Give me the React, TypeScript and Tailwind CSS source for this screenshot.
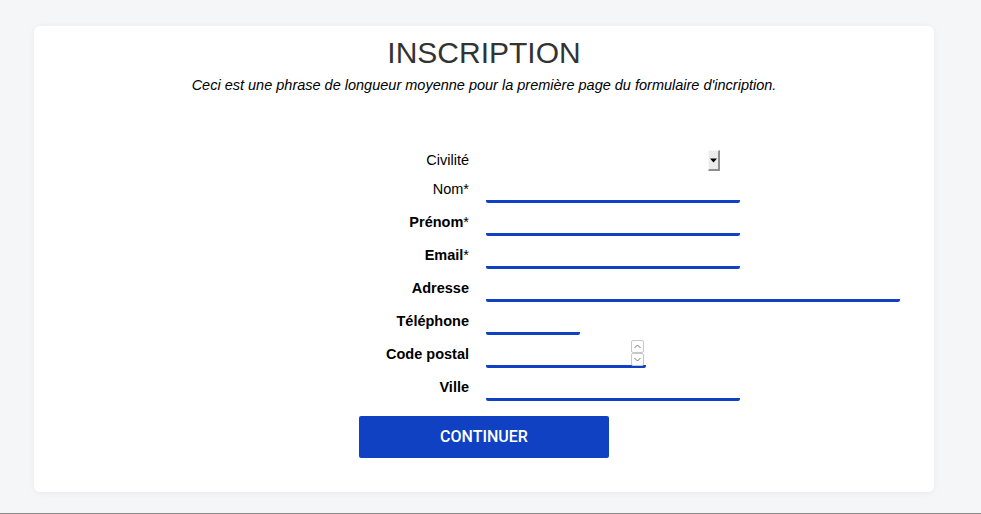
import React from "react";

const blue = "border-[#0f41c2]";

function Row({
  label,
  bold,
  star,
  width,
  children,
}: {
  label: string;
  bold?: boolean;
  star?: boolean;
  width: string;
  children?: React.ReactNode;
}) {
  return (
    <div className="flex items-start h-[26px]">
      <div className="w-[435px] text-right mt-[2px] leading-[20px] text-[14.5px] text-black">
        <span className={bold ? "font-bold" : ""}>{label}</span>
        {star ? <span>*</span> : null}
      </div>
      <div
        className={`ml-[17px] h-[26px] border-b-[3px] ${blue} rounded-b-[2px] ${width} flex justify-end items-end`}
      >
        {children}
      </div>
    </div>
  );
}

export default function App() {
  return (
    <div
      className="h-[514px] bg-[#f5f6f8] border-b border-[#8a8a8a] pt-[26px] pl-[34px]"
      style={{ fontFamily: '"Liberation Sans", Arial, sans-serif' }}
    >
      <div className="w-[900px] h-[466px] bg-white rounded-[6px] shadow-[0_1px_6px_rgba(0,0,0,0.06)] pt-[10px] flex flex-col">
        <h1 className="text-center text-[30px] leading-[34px] text-[#333333]">INSCRIPTION</h1>
        <p className="mt-[5px] text-center italic text-[14.5px] leading-[20px] text-black">
          Ceci est une phrase de longueur moyenne pour la première page du formulaire d'incription.
        </p>

        <div className="mt-[55px] flex flex-col gap-[7px]">
          <div className="flex items-center h-[20px]">
            <div className="w-[435px] text-right leading-[20px] text-[14.5px] text-black">Civilité</div>
            <div className="ml-[17px] w-[234px] h-[20px] flex justify-end">
              <div className="w-[12px] h-[21px] bg-[#ececec] border-r-2 border-b-2 border-[#8f8f8f] border-t border-l border-t-[#f8f8f8] border-l-[#f8f8f8] flex items-center justify-center">
                <svg width="7" height="5" viewBox="0 0 7 5">
                  <path d="M0 0.5h7L3.5 4.5z" fill="#000" />
                </svg>
              </div>
            </div>
          </div>

          <Row label="Nom" star width="w-[254px]" />
          <Row label="Prénom" bold star width="w-[254px]" />
          <Row label="Email" bold star width="w-[254px]" />
          <Row label="Adresse" bold width="w-[414px]" />
          <Row label="Téléphone" bold width="w-[94px]" />
          <Row label="Code postal" bold width="w-[160px]">
            <div className="mr-[2px] mb-[-1px] flex flex-col">
              <div className="w-[13px] h-[13px] border border-[#c8c8c8] rounded-[2px] bg-white flex items-center justify-center">
                <svg width="7" height="5" viewBox="0 0 7 5">
                  <path d="M0.5 4L3.5 1l3 3" stroke="#777" fill="none" strokeWidth="1" />
                </svg>
              </div>
              <div className="w-[13px] h-[13px] border border-[#c8c8c8] rounded-[2px] bg-white flex items-center justify-center">
                <svg width="7" height="5" viewBox="0 0 7 5">
                  <path d="M0.5 1L3.5 4l3-3" stroke="#777" fill="none" strokeWidth="1" />
                </svg>
              </div>
            </div>
          </Row>
          <Row label="Ville" bold width="w-[254px]" />
        </div>

        <div className="mt-[15px] flex justify-center">
          <button
            className="w-[250px] h-[42px] bg-[#0f41c2] rounded-[2px] text-white text-[16px] font-medium"
            style={{ fontFamily: "Roboto, sans-serif" }}
          >
            CONTINUER
          </button>
        </div>
      </div>
    </div>
  );
}
